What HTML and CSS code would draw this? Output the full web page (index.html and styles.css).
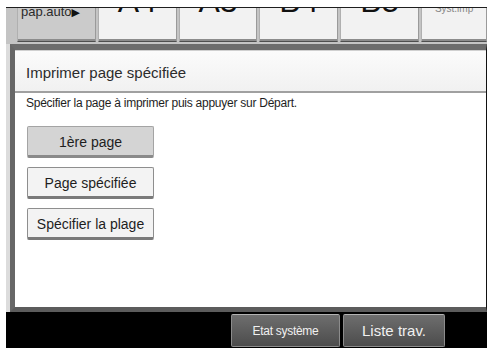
FILE: index.html
```html
<!DOCTYPE html>
<html lang="fr">
<head>
    <meta charset="UTF-8">
    <title>Imprimer page spécifiée</title>
    <link rel="stylesheet" href="styles.css">
</head>
<body>
    <div class="screen">
        <!-- onglets papier -->
        <div class="tabs">
            <div class="tab tab-auto"><span class="tab-small">pap.auto<span class="arrow">▶</span></span></div>
            <div class="tab"><span class="tab-big">A4</span></div>
            <div class="tab"><span class="tab-big">A3</span></div>
            <div class="tab"><span class="tab-big">B4</span></div>
            <div class="tab"><span class="tab-big">B5</span></div>
            <div class="tab tab-last"><span class="tab-tiny">Syst.imp</span></div>
        </div>

        <div class="panel">
            <div class="panel-header">Imprimer page spécifiée</div>
            <div class="panel-body">
                <p class="hint">Spécifier la page à imprimer puis appuyer sur Départ.</p>
                <div class="choices">
                    <button type="button" class="choice selected">1ère page</button>
                    <button type="button" class="choice">Page spécifiée</button>
                    <button type="button" class="choice">Spécifier la plage</button>
                </div>
            </div>
        </div>

        <div class="footer">
            <button type="button" class="foot-button etat">Etat système</button>
            <button type="button" class="foot-button liste">Liste trav.</button>
        </div>
    </div>
</body>
</html>
```

FILE: styles.css
```css
* {
    margin: 0;
    padding: 0;
    box-sizing: border-box;
}

body {
    background: #fff;
    font-family: "Liberation Sans", Arial, sans-serif;
    color: #222;
}

.screen {
    margin: 7px 0 0 6px;
    width: 481px;
    height: 341px;
    background: #dcdcdc;
    display: flex;
    flex-direction: column;
}

/* onglets */
.tabs {
    height: 37px;
    display: flex;
    gap: 2px;
    padding-left: 11px;
    border-top: 1px solid #1e1e1e;
    background: #c4c4c4;
}

.tab {
    width: 79px;
    height: 34px;
    overflow: hidden;
    background: #f2f2f2;
    border-left: 1px solid #b0b0b0;
    border-right: 1px solid #9a9a9a;
    border-bottom: 1px solid #4e4e4e;
    box-shadow: inset 0 -2px 0 #8c8c8c;
    text-align: center;
}

.tab-auto {
    background: #cbcbcb;
    text-align: left;
    padding-left: 3px;
}

.tab-last {
    width: 66px;
}

.tab-small {
    display: block;
    font-size: 13px;
    line-height: 13px;
    margin-top: -3px;
    color: #2a2a2a;
}

.arrow {
    font-family: "DejaVu Sans", sans-serif;
    font-size: 11px;
    color: #111;
}

.tab-big {
    display: block;
    font-size: 32px;
    line-height: 32px;
    margin-top: -23px;
    color: #111;
}

.tab-tiny {
    display: block;
    font-size: 10px;
    line-height: 10px;
    margin-top: -4px;
    color: #888;
}

/* panneau principal */
.panel {
    flex: 1;
    margin-left: 4px;
    background: #fff;
    border-left: 5px solid #676767;
    border-top: 6px solid #6c6c6c;
    border-bottom: 5px solid #5c5c5c;
    border-right: 1px solid #111;
    display: flex;
    flex-direction: column;
}

.panel-header {
    height: 43px;
    padding: 3px 0 0 11px;
    display: flex;
    align-items: center;
    font-size: 15px;
    color: #2c2c2c;
    background: linear-gradient(#fbfbfb, #f1f1f1);
    border-top: 1px solid #d0d0d0;
    border-bottom: 2px solid #a0a0a0;
}

.panel-body {
    padding: 3px 0 0 11px;
}

.hint {
    font-size: 12px;
    line-height: 14px;
    letter-spacing: -0.25px;
    color: #1e1e1e;
}

.choices {
    margin: 16px 0 0 1px;
    display: flex;
    flex-direction: column;
    gap: 9px;
}

.choice {
    width: 127px;
    height: 32px;
    font-family: "Liberation Sans", Arial, sans-serif;
    font-size: 14px;
    color: #1e1e1e;
    background: #f3f3f3;
    border: 1px solid #8e8e8e;
    border-bottom: 3px solid #7a7a7a;
    border-radius: 2px;
    padding-top: 1px;
}

.choice.selected {
    background: #d4d4d4;
    border-color: #a4a4a4;
    border-bottom-color: #8a8a8a;
}

/* barre du bas */
.footer {
    height: 36px;
    background: #000;
    display: flex;
    gap: 3px;
    padding: 2px 0 1px 225px;
}

.foot-button {
    height: 33px;
    font-family: "Liberation Sans", Arial, sans-serif;
    color: #f0f0f0;
    background: linear-gradient(#6e6e6e, #4c4c4c);
    border: 1px solid #8c8c8c;
    border-top-color: #b4b4b4;
    border-radius: 2px;
}

.etat {
    width: 109px;
    font-size: 12px;
    letter-spacing: -0.3px;
}

.liste {
    width: 102px;
    font-size: 15px;
}
```
